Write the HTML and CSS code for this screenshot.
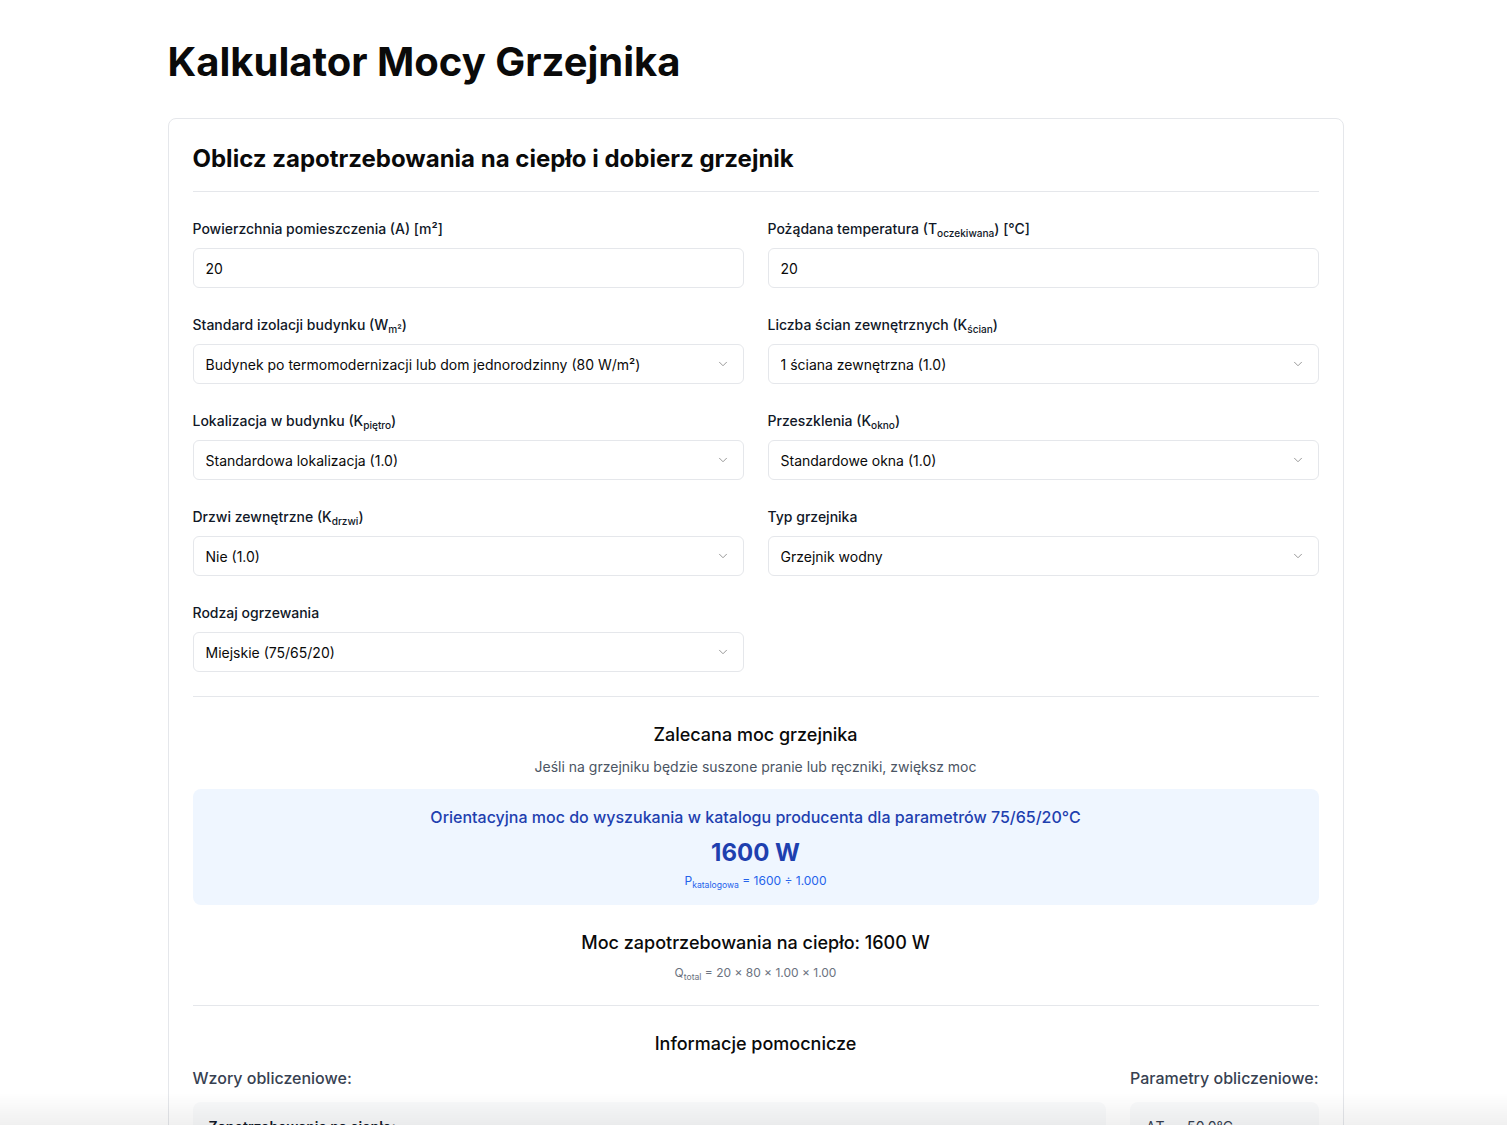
FILE: index.html
```html
<!DOCTYPE html>
<html lang="pl">
<head>
  <meta charset="UTF-8">
  <title>Kalkulator Mocy Grzejnika</title>
  <link rel="stylesheet" href="styles.css">
</head>
<body>

<main class="page">
  <h1>Kalkulator Mocy Grzejnika</h1>

  <section class="card">
    <h2 class="card-title">Oblicz zapotrzebowania na ciepło i dobierz grzejnik</h2>

    <div class="form-grid">
      <div class="field">
        <label>Powierzchnia pomieszczenia (A) [m²]</label>
        <input type="text" class="control" value="20">
      </div>
      <div class="field">
        <label>Pożądana temperatura (T<sub>oczekiwana</sub>) [°C]</label>
        <input type="text" class="control" value="20">
      </div>

      <div class="field">
        <label>Standard izolacji budynku (W<sub>m²</sub>)</label>
        <div class="select-wrap">
          <select class="control">
            <option>Budynek po termomodernizacji lub dom jednorodzinny (80 W/m²)</option>
          </select>
          <svg class="chevron" viewBox="0 0 24 24"><path d="M6 9l6 6 6-6"/></svg>
        </div>
      </div>
      <div class="field">
        <label>Liczba ścian zewnętrznych (K<sub>ścian</sub>)</label>
        <div class="select-wrap">
          <select class="control">
            <option>1 ściana zewnętrzna (1.0)</option>
          </select>
          <svg class="chevron" viewBox="0 0 24 24"><path d="M6 9l6 6 6-6"/></svg>
        </div>
      </div>

      <div class="field">
        <label>Lokalizacja w budynku (K<sub>piętro</sub>)</label>
        <div class="select-wrap">
          <select class="control">
            <option>Standardowa lokalizacja (1.0)</option>
          </select>
          <svg class="chevron" viewBox="0 0 24 24"><path d="M6 9l6 6 6-6"/></svg>
        </div>
      </div>
      <div class="field">
        <label>Przeszklenia (K<sub>okno</sub>)</label>
        <div class="select-wrap">
          <select class="control">
            <option>Standardowe okna (1.0)</option>
          </select>
          <svg class="chevron" viewBox="0 0 24 24"><path d="M6 9l6 6 6-6"/></svg>
        </div>
      </div>

      <div class="field">
        <label>Drzwi zewnętrzne (K<sub>drzwi</sub>)</label>
        <div class="select-wrap">
          <select class="control">
            <option>Nie (1.0)</option>
          </select>
          <svg class="chevron" viewBox="0 0 24 24"><path d="M6 9l6 6 6-6"/></svg>
        </div>
      </div>
      <div class="field">
        <label>Typ grzejnika</label>
        <div class="select-wrap">
          <select class="control">
            <option>Grzejnik wodny</option>
          </select>
          <svg class="chevron" viewBox="0 0 24 24"><path d="M6 9l6 6 6-6"/></svg>
        </div>
      </div>

      <div class="field">
        <label>Rodzaj ogrzewania</label>
        <div class="select-wrap">
          <select class="control">
            <option>Miejskie (75/65/20)</option>
          </select>
          <svg class="chevron" viewBox="0 0 24 24"><path d="M6 9l6 6 6-6"/></svg>
        </div>
      </div>
    </div>

    <div class="result">
      <h3 class="section-title">Zalecana moc grzejnika</h3>
      <p class="hint">Jeśli na grzejniku będzie suszone pranie lub ręczniki, zwiększ moc</p>

      <div class="result-box">
        <p class="result-label">Orientacyjna moc do wyszukania w katalogu producenta dla parametrów 75/65/20°C</p>
        <p class="result-value">1600 W</p>
        <p class="result-formula">P<sub>katalogowa</sub> = 1600 ÷ 1.000</p>
      </div>

      <h3 class="section-title demand">Moc zapotrzebowania na ciepło: 1600 W</h3>
      <p class="formula">Q<sub>total</sub> = 20 × 80 × 1.00 × 1.00</p>
    </div>

    <div class="info">
      <h3 class="section-title">Informacje pomocnicze</h3>
      <div class="info-cols">
        <div class="info-col">
          <h4>Wzory obliczeniowe:</h4>
          <div class="info-box">
            <p class="info-head">Zapotrzebowanie na ciepło:</p>
            <p>Q<sub>total</sub> = A × W<sub>m²</sub> × K<sub>ścian</sub> × K<sub>piętro</sub> × K<sub>okno</sub> × K<sub>drzwi</sub></p>
            <p class="info-head">Moc katalogowa:</p>
            <p>P<sub>katalogowa</sub> = Q<sub>total</sub> ÷ f<sub>korekcyjny</sub></p>
          </div>
        </div>
        <div class="info-col params">
          <h4>Parametry obliczeniowe:</h4>
          <div class="info-box">
            <p>ΔT<sub>s</sub> = 50.0°C</p>
            <p>f = 1.000</p>
          </div>
        </div>
      </div>
    </div>
  </section>
</main>

<div class="bottom-fade"></div>

</body>
</html>
```

FILE: styles.css
```css
* {
  box-sizing: border-box;
}

body {
  margin: 0;
  font-family: Inter, "Noto Sans", sans-serif;
  color: #0a0a0a;
  background: #fff;
}

.page {
  max-width: 1180px;
  margin: 0 auto;
  padding: 40px 0 60px 4px;
}

h1 {
  margin: 0 0 34px;
  font-size: 40px;
  line-height: 44px;
  font-weight: 700;
}

.card {
  border: 1px solid #e5e7eb;
  border-radius: 8px;
  padding: 24px;
}

.card-title {
  margin: 0;
  font-size: 24px;
  line-height: 32px;
  font-weight: 700;
  padding-bottom: 16px;
  border-bottom: 1px solid #e5e7eb;
}

.form-grid {
  display: grid;
  grid-template-columns: 1fr 1fr;
  column-gap: 24px;
  row-gap: 27px;
  padding: 27px 0 24px;
  border-bottom: 1px solid #e5e7eb;
}

.field label {
  display: block;
  font-size: 14px;
  line-height: 20px;
  font-weight: 500;
  color: #111827;
  margin-bottom: 9px;
}

sub {
  font-size: 0.72em;
  line-height: 0;
  vertical-align: -0.3em;
}

.control {
  display: block;
  width: 100%;
  height: 40px;
  padding: 0 12px;
  border: 1px solid #e5e7eb;
  border-radius: 6px;
  background: #fff;
  font-family: inherit;
  font-size: 14px;
  color: #0a0a0a;
  appearance: none;
  -webkit-appearance: none;
  outline: none;
}

.select-wrap {
  position: relative;
}

.chevron {
  position: absolute;
  right: 14px;
  top: 13px;
  width: 14px;
  height: 14px;
  fill: none;
  stroke: #8a8a8a;
  stroke-width: 1.5;
  stroke-linecap: round;
  stroke-linejoin: round;
  pointer-events: none;
}

.result {
  text-align: center;
  padding: 24px 0 24px;
  border-bottom: 1px solid #e5e7eb;
}

.section-title {
  margin: 0;
  font-size: 18px;
  line-height: 28px;
  font-weight: 500;
}

.hint {
  margin: 8px 0 12px;
  font-size: 14px;
  line-height: 20px;
  color: #4b5563;
}

.result-box {
  background: #eff6ff;
  border-radius: 8px;
  padding: 16px;
}

.result-box p {
  margin: 0;
}

.result-label {
  font-size: 16px;
  line-height: 24px;
  font-weight: 500;
  color: #1e40af;
}

.result-value {
  margin-top: 8px !important;
  font-size: 24px;
  line-height: 32px;
  font-weight: 700;
  color: #1e40af;
}

.result-formula {
  margin-top: 4px !important;
  font-size: 12px;
  line-height: 16px;
  color: #2563eb;
}

.demand {
  margin-top: 24px;
}

.formula {
  margin: 8px 0 0;
  font-size: 12px;
  line-height: 16px;
  color: #6b7280;
}

.info {
  padding-top: 24px;
}

.info > .section-title {
  text-align: center;
}

.info-cols {
  display: flex;
  gap: 24px;
  margin-top: 8px;
}

.info-col {
  flex: 1;
}

.info-col.params {
  flex: 0 0 auto;
}

.info-col h4 {
  margin: 0 0 12px;
  font-size: 16px;
  line-height: 24px;
  font-weight: 500;
  color: #374151;
  white-space: nowrap;
}

.info-box {
  background: #f9fafb;
  border-radius: 8px;
  padding: 14px 16px;
  font-size: 14px;
  line-height: 22px;
  color: #374151;
}

.info-box p {
  margin: 0 0 6px;
}

.info-head {
  font-weight: 600;
  color: #111827;
}

.bottom-fade {
  position: fixed;
  left: 0;
  right: 0;
  bottom: 0;
  height: 32px;
  background: linear-gradient(rgba(0, 0, 0, 0), rgba(0, 0, 0, 0.06));
  pointer-events: none;
}
```
